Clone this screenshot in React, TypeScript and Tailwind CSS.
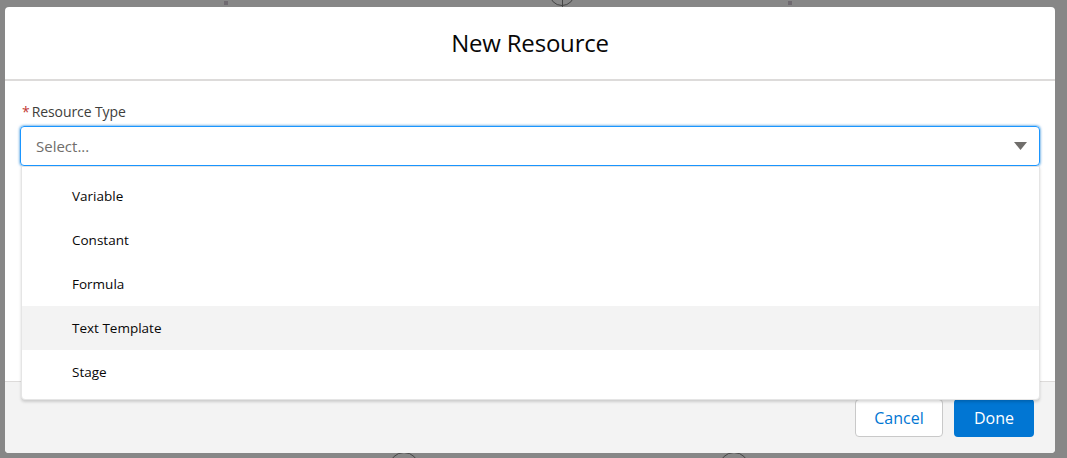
import React from "react";

const items = ["Variable", "Constant", "Formula", "Text Template", "Stage"];

export default function App() {
  return (
    <div
      className="relative w-[1067px] h-[458px] overflow-hidden bg-[#878787]"
      style={{ fontFamily: '"Open Sans", "Noto Sans", sans-serif' }}
    >
      {/* background canvas marks */}
      <div className="absolute left-[224px] top-[1px] w-[4px] h-[4px] bg-[#6f6a70]" />
      <div className="absolute left-[788px] top-[1px] w-[4px] h-[4px] bg-[#6f6a70]" />
      <div className="absolute left-[549px] top-[-20px] w-[26px] h-[26px] rounded-full border border-[#444]">
        <div className="mx-auto mt-[16px] w-px h-[10px] bg-[#444]" />
      </div>
      <div className="absolute left-[389px] top-[452px] w-[30px] h-[30px] rounded-full border border-[#444]" />
      <div className="absolute left-[719px] top-[452px] w-[30px] h-[30px] rounded-full border border-[#444]" />

      <div className="relative ml-[5px] mt-[7px] w-[1050px] h-[446px] rounded-[4px] bg-white flex flex-col overflow-visible">
        <div className="h-[74px] flex items-center justify-center border-b-2 border-[#dddbda] rounded-t-[4px]">
          <h1 className="text-[24px] text-[#080707] leading-none tracking-[-0.2px]">New Resource</h1>
        </div>
        <div className="flex-1 px-[15px] pt-[22px]">
          <div className="flex items-center h-[18px] pl-[2px] text-[14px] text-[#3e3e3c] leading-none">
            <span className="text-[#c23934] mr-[2px]">*</span>
            <span className="tracking-[-0.1px]">Resource Type</span>
          </div>
          <div className="mt-[5px] h-[40px] w-[1020px] rounded-[4px] border border-[#1b96ff] shadow-[0_0_3px_#0176d3] flex items-center justify-between pl-[15px] pr-[12px]">
            <span className="text-[15px] text-[#706e6b]">Select...</span>
            <svg width="13" height="8" viewBox="0 0 13 8">
              <path d="M0 0 L13 0 L6.5 8 Z" fill="#706e6b" />
            </svg>
          </div>
        </div>
        <div className="h-[72px] bg-[#f3f3f3] border-t border-[#dddbda] rounded-b-[4px] flex items-center justify-end gap-[11px] pr-[21px]">
          <button className="h-[38px] w-[88px] rounded-[4px] border border-[#c9c9c9] bg-white text-[16px] text-[#0176d3]">
            Cancel
          </button>
          <button className="h-[38px] w-[80px] rounded-[4px] bg-[#0176d3] text-[16px] text-white">
            Done
          </button>
        </div>

        {/* dropdown */}
        <div className="absolute left-[16px] top-[159px] w-[1019px] h-[234px] bg-white border border-[#e5e5e5] rounded-b-[4px] shadow-[0_2px_3px_rgba(0,0,0,0.16)] pt-[7px]">
          {items.map((it) => (
            <div
              key={it}
              className={
                "h-[44px] flex items-center pl-[50px] text-[13.5px] text-[#080707] " +
                (it === "Text Template" ? "bg-[#f3f3f3]" : "")
              }
            >
              {it}
            </div>
          ))}
        </div>
      </div>
    </div>
  );
}
